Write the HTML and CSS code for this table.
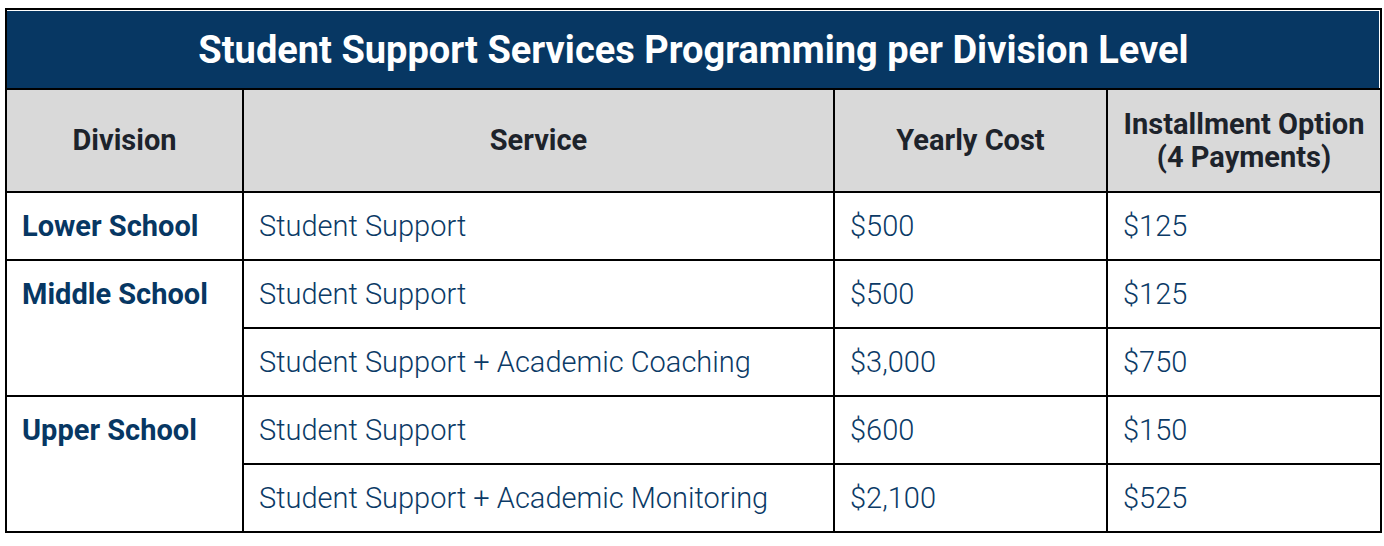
FILE: index.html
```html
<!DOCTYPE html>
<html lang="en">
<head>
<meta charset="utf-8">
<title>Student Support Services Programming per Division Level</title>
<link rel="stylesheet" href="styles.css">
</head>
<body>
<table class="fees">
  <colgroup>
    <col class="c-div">
    <col class="c-svc">
    <col class="c-cost">
    <col class="c-inst">
  </colgroup>
  <thead>
    <tr class="title-row">
      <th colspan="4" class="title">Student Support Services Programming per Division Level</th>
    </tr>
    <tr class="head-row">
      <th>Division</th>
      <th>Service</th>
      <th>Yearly Cost</th>
      <th>Installment Option<br>(4 Payments)</th>
    </tr>
  </thead>
  <tbody>
    <tr>
      <td class="division">Lower School</td>
      <td>Student Support</td>
      <td>$500</td>
      <td>$125</td>
    </tr>
    <tr>
      <td class="division" rowspan="2">Middle School</td>
      <td>Student Support</td>
      <td>$500</td>
      <td>$125</td>
    </tr>
    <tr>
      <td>Student Support + Academic Coaching</td>
      <td>$3,000</td>
      <td>$750</td>
    </tr>
    <tr>
      <td class="division" rowspan="2">Upper School</td>
      <td>Student Support</td>
      <td>$600</td>
      <td>$150</td>
    </tr>
    <tr>
      <td>Student Support + Academic Monitoring</td>
      <td>$2,100</td>
      <td>$525</td>
    </tr>
  </tbody>
</table>
</body>
</html>
```

FILE: styles.css
```css
html, body {
  margin: 0;
  padding: 0;
  background: #ffffff;
}

body {
  padding: 8px 0 0 5px;
  font-family: Roboto, "Liberation Sans", sans-serif;
}

.fees {
  border-collapse: collapse;
  table-layout: fixed;
  width: 1375px;
  border: 2px solid #000;
}

.c-div { width: 237px; }
.c-svc { width: 591px; }
.c-cost { width: 273px; }
.c-inst { width: 274px; }

.fees th,
.fees td {
  border: 2px solid #000;
  padding: 0 15px;
}

.title-row th.title {
  height: 77px;
  padding-top: 1px;
  background: #073763;
  color: #ffffff;
  font-size: 38px;
  font-weight: 700;
  text-align: center;
  vertical-align: middle;
  box-shadow: inset 0 1px 0 #ffffff, inset -1px 0 0 #ffffff;
}

.head-row th {
  height: 101px;
  background: #d9d9d9;
  color: #1d232b;
  font-size: 29px;
  font-weight: 700;
  line-height: 33px;
  text-align: center;
  vertical-align: middle;
}

.fees tbody tr {
  height: 68px;
}

.fees tbody td {
  color: #0b3a66;
  font-size: 29px;
  font-weight: 300;
  line-height: 33px;
  text-align: left;
  vertical-align: top;
  padding-top: 17px;
  padding-bottom: 16px;
}

.fees tbody td.division {
  color: #073763;
  font-weight: 700;
}
```
